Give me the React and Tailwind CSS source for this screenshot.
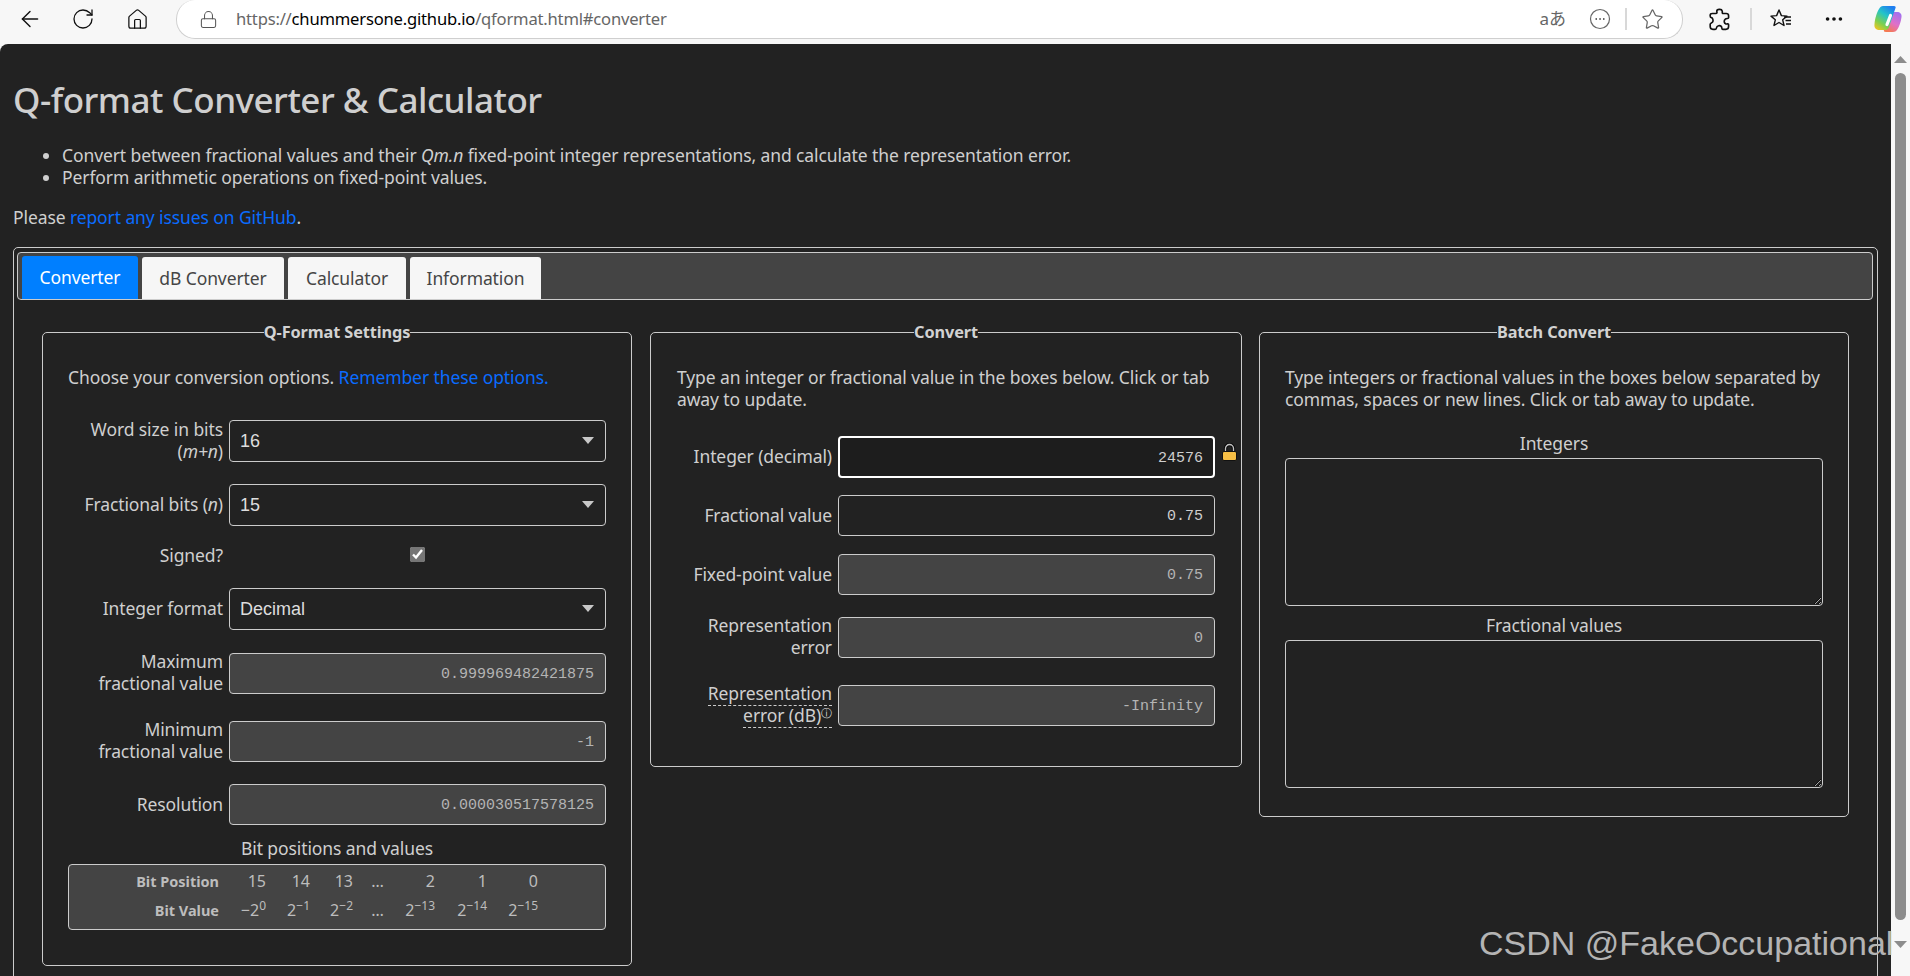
import React from 'react';
import { ArrowLeft, RotateCw, Home, Lock, Star, MoreHorizontal } from 'lucide-react';

const inputBase =
  "w-full h-full rounded-[4px] border border-[#ccc] px-[11px] pt-[2px] text-right text-[15px] tracking-normal font-['Liberation_Mono',monospace] outline-none";

const ReadOnlyInput = ({ value }) => (
  <input readOnly value={value} className={`${inputBase} bg-[#444] text-[#b4b4b4]`} />
);

const EditInput = ({ value }) => (
  <input readOnly value={value} className={`${inputBase} bg-[#222] text-[#cfcfcf]`} />
);

const SelectBox = ({ value, options }) => (
  <div className="relative h-[42px] w-[377px]">
    <select
      defaultValue={value}
      className="h-full w-full appearance-none rounded-[4px] border border-[#ccc] bg-[#222] pl-[10px] text-[18px] tracking-normal text-[#ddd] font-['Liberation_Sans',sans-serif] outline-none"
    >
      {options.map(o => (
        <option key={o}>{o}</option>
      ))}
    </select>
    <svg className="absolute right-[12px] top-[17px]" width="12" height="8" viewBox="0 0 12 8">
      <path d="M0 0h12L6 7z" fill="#c8c8c8" />
    </svg>
  </div>
);

const Row = ({ label, className, children }) => (
  <div className={`flex items-center gap-[6px] ${className}`}>
    <div className="w-[155px] shrink-0 -translate-y-[1px] text-right leading-[22px]">{label}</div>
    {children}
  </div>
);

const Field = ({ children }) => <div className="h-[41px] w-[377px]">{children}</div>;

const Fieldset = ({ title, className, children }) => (
  <fieldset className={`rounded-[5px] border border-[#ccc] ${className}`}>
    <legend className="mx-auto text-center text-[16.3px] font-bold leading-[22px] text-[#d2d2d2]">{title}</legend>
    {children}
  </fieldset>
);

const bitPositions = ['15', '14', '13', '…', '2', '1', '0'];
const bitValues = [
  ['−2', '0'],
  ['2', '−1'],
  ['2', '−2'],
  null,
  ['2', '−13'],
  ['2', '−14'],
  ['2', '−15'],
];

const BitTable = () => (
  <div className="grid h-[66px] grid-cols-[150px_47px_44px_43px_31px_51px_52px_51px] content-start gap-y-[7px] rounded-[4px] border border-[#ccc] bg-[#444] pt-[5px] text-[16px] leading-[22px] tracking-normal text-[#bdbdbd]">
    <div className="text-right text-[14.5px] font-bold">Bit Position</div>
    {bitPositions.map((p, i) => (
      <div key={i} className="text-right">{p}</div>
    ))}
    <div className="text-right text-[14.5px] font-bold">Bit Value</div>
    {bitValues.map((v, i) => (
      <div key={i} className="text-right whitespace-nowrap">
        {v ? (
          <>
            {v[0]}
            <sup className="text-[12px] leading-none">{v[1]}</sup>
          </>
        ) : (
          '…'
        )}
      </div>
    ))}
  </div>
);

const SettingsPanel = () => (
  <Fieldset title="Q-Format Settings" className="h-[645px] px-[25px] pt-[23px]">
    <p className="leading-[22px]">
      Choose your conversion options. <a className="text-[#0a6cff]">Remember these options.</a>
    </p>
    <Row label={<>Word size in bits (<i>m+n</i>)</>} className="mt-[31px]">
      <SelectBox value="16" options={['8', '16', '24', '32']} />
    </Row>
    <Row label={<>Fractional bits (<i>n</i>)</>} className="mt-[21px]">
      <SelectBox value="15" options={['14', '15', '16']} />
    </Row>
    <Row label={<span className="block -translate-y-[2px]">Signed?</span>} className="mt-[22px] h-[19px]">
      <div className="flex h-full w-[377px] justify-center">
        <input type="checkbox" defaultChecked className="mt-[-1px] h-[15px] w-[15px] accent-[#767676]" />
      </div>
    </Row>
    <Row label="Integer format" className="mt-[21px]">
      <SelectBox value="Decimal" options={['Decimal', 'Hexadecimal', 'Binary']} />
    </Row>
    <Row label="Maximum fractional value" className="mt-[21px]">
      <Field><ReadOnlyInput value="0.999969482421875" /></Field>
    </Row>
    <Row label="Minimum fractional value" className="mt-[24px]">
      <Field><ReadOnlyInput value="-1" /></Field>
    </Row>
    <Row label="Resolution" className="mt-[21px]">
      <Field><ReadOnlyInput value="0.000030517578125" /></Field>
    </Row>
    <div className="mt-[12px] text-center leading-[22px]">Bit positions and values</div>
    <div className="mt-[5px]">
      <BitTable />
    </div>
  </Fieldset>
);

const LockBadge = () => (
  <svg className="absolute left-[384px] top-[7px]" width="15" height="18" viewBox="0 0 15 18">
    <path d="M3.500 9V5.500a4 4 0 0 1 8 0V9" fill="none" stroke="#0c0c0c" strokeWidth="3.400" />
    <path d="M3.500 9V5.500a4 4 0 0 1 8 0V9" fill="none" stroke="#c4c4c4" strokeWidth="1.300" />
    <rect x="0.500" y="8.500" width="14" height="9" rx="1.500" fill="#f7bf45" stroke="#111" />
  </svg>
);

const ConvertPanel = () => (
  <Fieldset title="Convert" className="h-[446px] px-[26px] pt-[23px]">
    <p className="leading-[22px]">
      Type an integer or fractional value in the boxes below. Click or tab away to update.
    </p>
    <Row label="Integer (decimal)" className="mt-[26px]">
      <div className="relative h-[42px] w-[377px]">
        <input
          readOnly
          value="24576"
          className="h-full w-full rounded-[4px] border-2 border-white bg-[#1d1d1d] px-[10px] pt-[3px] text-right text-[15px] tracking-normal text-[#cfcfcf] font-['Liberation_Mono',monospace] outline-none"
        />
        <LockBadge />
      </div>
    </Row>
    <Row label="Fractional value" className="mt-[17px]">
      <Field><EditInput value="0.75" /></Field>
    </Row>
    <Row label="Fixed-point value" className="mt-[18px]">
      <Field><ReadOnlyInput value="0.75" /></Field>
    </Row>
    <Row label="Representation error" className="mt-[20px]">
      <Field><ReadOnlyInput value="0" /></Field>
    </Row>
    <Row
      label={
        <span className="border-b border-dashed border-[#ccc]">
          Representation error (dB)
          <sup className="font-['DejaVu_Sans',sans-serif] text-[11px] leading-none text-[#ddd]">ⓘ</sup>
        </span>
      }
      className="mt-[24px]"
    >
      <Field><ReadOnlyInput value="-Infinity" /></Field>
    </Row>
  </Fieldset>
);

const BatchPanel = () => (
  <Fieldset title="Batch Convert" className="h-[496px] px-[25px] pt-[23px]">
    <p className="leading-[22px]">
      Type integers or fractional values in the boxes below separated by commas, spaces or new
      lines. Click or tab away to update.
    </p>
    <div className="mt-[22px] text-center leading-[22px]">Integers</div>
    <textarea className="mt-[4px] block h-[148px] w-full rounded-[4px] border border-[#ccc] bg-[#222] outline-none [color-scheme:dark]" />
    <div className="mt-[8px] text-center leading-[22px]">Fractional values</div>
    <textarea className="mt-[4px] block h-[148px] w-full rounded-[4px] border border-[#ccc] bg-[#222] outline-none [color-scheme:dark]" />
  </Fieldset>
);

const tabs = [
  { name: 'dB Converter', width: 'w-[142px]' },
  { name: 'Calculator', width: 'w-[118px]' },
  { name: 'Information', width: 'w-[131px]' },
];

const TabBar = () => (
  <div className="flex h-[48px] items-end gap-[4px] rounded-[4px] border border-[#ccc] bg-[#444] pl-[4px]">
    <div className="flex h-[43px] w-[116px] items-center justify-center rounded-t-[3px] bg-[#007fff] text-white">
      Converter
    </div>
    {tabs.map(t => (
      <div
        key={t.name}
        className={`flex h-[42px] items-center justify-center rounded-t-[3px] bg-[#f6f6f6] text-[#454545] ${t.width}`}
      >
        {t.name}
      </div>
    ))}
  </div>
);

const ExtensionsIcon = () => (
  <svg width="23" height="23" viewBox="0 0 21 21" fill="none" stroke="#111" strokeWidth="1.500" strokeLinejoin="round">
    <path d="M8 3C8 1 12.500 .5 13 2.800 13.300 4.200 12.500 4.500 13.500 5H16.500C18 5 18.800 6 18.800 7V9C18.800 10 16.800 9.200 15.800 10.200 14.300 11.500 14.500 14 16.300 14.500 17.500 14.800 18.800 14 18.800 15.200V17C18.800 18.500 17.800 19.500 16.300 19.500H13.500C12.300 19.500 12.800 18 12.300 17 11 15.500 8 16 7.800 18 7.700 19 7.500 19.500 6.500 19.500H4.500C3 19.500 2 18.500 2 17V14.800C2 13.500 3.500 13.800 4.200 12.800 5.200 11.300 4.200 8.800 3 8.800 2.200 8.800 2 8 2 7.300V6.500C2 5.500 3 5 4 5H7C8.500 5 8.300 4 8 3Z" />
  </svg>
);

const FavIcon = () => (
  <svg width="24" height="24" viewBox="0 0 24 24" fill="none" stroke="#111" strokeWidth="1.400" strokeLinejoin="round">
    <path d="M10 3l2.400 5.600 5.600.5-4.300 3.700 1.300 5.700L10 15.500 5 18.500l1.300-5.700L2 9.100l5.600-.5z" />
    <path d="M15 10h7M16.500 13.500H22M17 17h5" />
  </svg>
);

const CopilotLogo = () => (
  <svg width="28" height="26" viewBox="0 0 28 26">
    <defs>
      <linearGradient id="cpA" x1="0.100" y1="1" x2="0.700" y2="0">
        <stop offset="0" stopColor="#f7c51e" />
        <stop offset="0.300" stopColor="#7ed04f" />
        <stop offset="0.650" stopColor="#22c4c8" />
        <stop offset="1" stopColor="#1f7ef0" />
      </linearGradient>
      <linearGradient id="cpB" x1="0.800" y1="0" x2="0.300" y2="1">
        <stop offset="0" stopColor="#a070f0" />
        <stop offset="0.550" stopColor="#e070c8" />
        <stop offset="1" stopColor="#f57a50" />
      </linearGradient>
    </defs>
    <path d="M13 13C14 9 15 6 17 6H23C26 6 28 8 27.500 11 27 16 25 21 23 24 22 25 21 26 19 26H12C10 26 9.500 25 10 24z" fill="url(#cpB)" />
    <path d="M9 0H20C21.500 0 22 1 21.500 2L15 21C14.300 23.500 12.500 24 10.500 24H5.500C1.500 24 0 21.500 .5 18 1 12 3 6 5 3 6 1 7.500 0 9 0z" fill="url(#cpA)" />
    <path d="M16.500 9.500l-3.500 9" stroke="#fff" strokeWidth="3.200" strokeLinecap="round" />
  </svg>
);

const Toolbar = () => (
  <div className="flex h-[44px] shrink-0 bg-[#f7f7f7] text-[#111]">
    <div className="flex h-[38px] items-center">
      <ArrowLeft className="ml-[17px]" size={26} strokeWidth={1.3} />
      <RotateCw className="ml-[28px]" size={24} strokeWidth={1.3} />
      <Home className="ml-[31px]" size={23} strokeWidth={1.3} />
    </div>
    <div className="ml-[27px] flex h-[39px] w-[1507px] items-center rounded-b-[19px] rounded-r-[19px] rounded-l-[19px] rounded-t-none border border-t-0 border-[#cfcfcf] bg-white pl-[22px] text-[16.6px] tracking-normal text-[#666]">
      <Lock size={19} strokeWidth={1.3} color="#555" />
      <span className="ml-[18px] tracking-[-0.2px]">
        https://<span className="text-black">chummersone.github.io</span>/qformat.html#converter
      </span>
      <span className="ml-auto text-[17px] text-[#666]">aあ</span>
      <svg className="ml-[23px]" width="22" height="22" viewBox="0 0 22 22" fill="none" stroke="#666" strokeWidth="1.200">
        <circle cx="11" cy="11" r="9.500" />
        <path d="M6.500 11h1.500M10.300 11h1.500M14 11h1.500" strokeWidth="1.800" />
      </svg>
      <div className="ml-[14px] h-[22px] w-[2px] bg-[#d8d8d8]" />
      <Star className="ml-[14px] mr-[18px]" size={23} strokeWidth={1.3} color="#666" />
    </div>
    <div className="flex h-[38px] items-center">
      <div className="ml-[25px]"><ExtensionsIcon /></div>
      <div className="ml-[19px] h-[22px] w-[2px] bg-[#d8d8d8]" />
      <div className="ml-[17px]"><FavIcon /></div>
      <MoreHorizontal className="ml-[30px]" size={22} strokeWidth={2} />
      <div className="ml-[29px]"><CopilotLogo /></div>
    </div>
  </div>
);

const Scrollbar = () => (
  <div className="flex w-[19px] shrink-0 flex-col items-center rounded-tr-[8px] bg-[#f7f7f7]">
    <svg className="mt-[12px]" width="13" height="7" viewBox="0 0 13 7"><path d="M6.500 0L13 7H0z" fill="#8c8c8c" /></svg>
    <div className="mt-[10px] h-[847px] w-[11px] rounded-full bg-[#8c8c8c]" />
    <svg className="mt-[21px]" width="13" height="7" viewBox="0 0 13 7"><path d="M0 0h13L6.500 7z" fill="#8c8c8c" /></svg>
  </div>
);

const App = () => (
  <div className="relative flex h-[976px] flex-col overflow-hidden bg-[#f7f7f7] font-['Noto_Sans','Noto_Sans_CJK_JP',sans-serif] text-[17.5px] tracking-[-0.1px] text-[#cfcfcf]">
    <Toolbar />
    <div className="flex min-h-0 flex-1">
      <main className="min-w-0 flex-1 rounded-tl-[8px] bg-[#222] pl-[13px] pr-[13px] pt-[32px]">
        <h1 className="text-[35px] font-medium leading-[48px] tracking-[-0.5px] text-[#cfcfcf]">Q-format Converter &amp; Calculator</h1>
        <ul className="mt-[20px] list-disc pl-[49px] leading-[22px]">
          <li>
            Convert between fractional values and their <i>Qm.n</i> fixed-point integer representations, and calculate the representation error.
          </li>
          <li>Perform arithmetic operations on fixed-point values.</li>
        </ul>
        <p className="mt-[18px] leading-[22px]">
          Please <a className="text-[#0a6cff]">report any issues on GitHub</a>.
        </p>
        <div className="mt-[19px] h-[800px] rounded-[5px] border border-[#ccc] pl-[3px] pr-[4px] pt-[4px]">
          <TabBar />
          <div className="mt-[21px] grid grid-cols-[590px_591px_590px] items-start gap-x-[18px] pl-[25px]">
            <SettingsPanel />
            <ConvertPanel />
            <BatchPanel />
          </div>
        </div>
      </main>
      <Scrollbar />
    </div>
    <div className="absolute left-[1479px] top-[919px] whitespace-nowrap font-['Liberation_Sans',sans-serif] text-[34px] leading-[48px] tracking-normal text-[#b4b4b4]">
      CSDN @FakeOccupational
    </div>
  </div>
);

export default App;
